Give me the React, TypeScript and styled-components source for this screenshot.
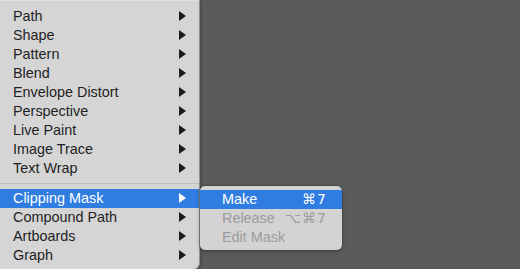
import { FC } from 'react';
import styled, { createGlobalStyle } from 'styled-components';

const GlobalStyle = createGlobalStyle`
    html, body {
        margin: 0;
        padding: 0;
        background: #5b5b5b;
        width: 520px;
        height: 269px;
        overflow: hidden;
        font-family: "Liberation Sans", Arial, "DejaVu Sans", sans-serif;
    }
`

type Item = { label: string; sub?: boolean; active?: boolean }

const groupA: Item[] = [
    { label: 'Path', sub: true },
    { label: 'Shape', sub: true },
    { label: 'Pattern', sub: true },
    { label: 'Blend', sub: true },
    { label: 'Envelope Distort', sub: true },
    { label: 'Perspective', sub: true },
    { label: 'Live Paint', sub: true },
    { label: 'Image Trace', sub: true },
    { label: 'Text Wrap', sub: true },
]

const groupB: Item[] = [
    { label: 'Clipping Mask', sub: true, active: true },
    { label: 'Compound Path', sub: true },
    { label: 'Artboards', sub: true },
    { label: 'Graph', sub: true },
]

const subItems = [
    { label: 'Make', key: '⌘7', active: true },
    { label: 'Release', key: '⌥⌘7', disabled: true },
    { label: 'Edit Mask', disabled: true },
]

const Arrow: FC<{ light?: boolean }> = ({ light }) => (
    <svg width="7" height="10" viewBox="0 0 7 10">
        <path d="M0 0 L7 5 L0 10 Z" fill={light ? '#ffffff' : '#1c1c1c'} />
    </svg>
)

export default function App() {
    return (
        <>
            <GlobalStyle />
            <SStage>
                <SMenu>
                    <STopStrip />
                    <SList>
                        {groupA.map((it) => (
                            <SRow key={it.label} $active={it.active}>
                                <span>{it.label}</span>
                                {it.sub && <Arrow light={it.active} />}
                            </SRow>
                        ))}
                        <SSeparator />
                        {groupB.map((it) => (
                            <SRow key={it.label} $active={it.active}>
                                <span>{it.label}</span>
                                {it.sub && <Arrow light={it.active} />}
                            </SRow>
                        ))}
                    </SList>
                </SMenu>
                <SSubMenu>
                    {subItems.map((it) => (
                        <SSubRow key={it.label} $active={it.active} $disabled={it.disabled}>
                            <span>{it.label}</span>
                            {it.key && <SKey>{it.key}</SKey>}
                        </SSubRow>
                    ))}
                </SSubMenu>
            </SStage>
        </>
    )
}

const SStage = styled.div`
    position: relative;
    width: 520px;
    height: 269px;
`
const SMenu = styled.div`
    width: 199px;
    height: 269px;
    background: #d5d5d5;
    border-right: 1px solid #8e8e8e;
    border-radius: 0 0 6px 0;
    box-shadow: 1px 0 3px rgba(0, 0, 0, 0.25);
    overflow: hidden;
`
const STopStrip = styled.div`
    height: 3px;
    background: #dedede;
    border-bottom: 1px solid #cacaca;
    box-sizing: border-box;
`
const SList = styled.div`
    padding-top: 4px;
`
const SRow = styled.div<{ $active?: boolean }>`
    height: 19px;
    display: flex;
    align-items: center;
    justify-content: space-between;
    padding: 0 13px 1px 13px;
    box-sizing: border-box;
    font-size: 14.4px;
    color: ${(p) => (p.$active ? '#ffffff' : '#1e1e1e')};
    background: ${(p) => (p.$active ? '#2f7de1' : 'transparent')};
`
const SSeparator = styled.div`
    height: 1px;
    margin: 5px 0;
    background: #bdbdbd;
`
const SSubMenu = styled.div`
    position: absolute;
    left: 200px;
    top: 186px;
    width: 142px;
    height: 64px;
    box-sizing: border-box;
    padding-top: 4px;
    background: #d3d3d3;
    border-radius: 5px;
    box-shadow: 0 1px 4px rgba(0, 0, 0, 0.35), 0 0 0 0.5px rgba(0, 0, 0, 0.2);
    overflow: hidden;
`
const SSubRow = styled.div<{ $active?: boolean; $disabled?: boolean }>`
    height: 19px;
    display: flex;
    align-items: center;
    justify-content: space-between;
    padding: 0 15px 1px 22px;
    box-sizing: border-box;
    font-size: 14.4px;
    color: ${(p) => (p.$active ? '#ffffff' : p.$disabled ? '#9c9c9c' : '#1e1e1e')};
    background: ${(p) => (p.$active ? '#2f7de1' : 'transparent')};
`
const SKey = styled.span`
    font-family: "DejaVu Sans", sans-serif;
    font-size: 14px;
    letter-spacing: 1px;
`
